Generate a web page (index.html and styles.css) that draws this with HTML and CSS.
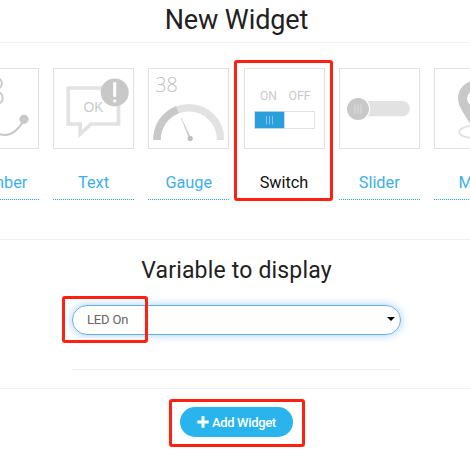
FILE: index.html
```html
<!DOCTYPE html>
<html lang="en">
<head>
<meta charset="utf-8">
<title>New Widget</title>
<link rel="stylesheet" href="styles.css">
</head>
<body>
<header class="title"><h1>New Widget</h1></header>
<section class="widgets">
  <a class="widget">
    <svg class="tile" viewBox="1 1 79 79">
      <text x="8" y="36.7" class="number" textLength="39.5" lengthAdjust="spacingAndGlyphs">88</text>
      <path d="M12 42C24 52 34 67 47 67C56 67 62 59 66 52" fill="none" stroke="#c8c8c8" stroke-width="2"/>
      <circle cx="66" cy="51.3" r="4.6" fill="#c8c8c8"/>
    </svg>
    <span class="label">Number</span>
  </a>
  <a class="widget">
    <svg class="tile" viewBox="1 1 79 79">
      <path d="M15.2 20H65.5V56H38L27.2 66V56H15.2Z" fill="none" stroke="#e2e2e2" stroke-width="3.7"/>
      <text x="30.5" y="43.5" class="ok" textLength="20" lengthAdjust="spacingAndGlyphs">OK</text>
      <circle cx="61.7" cy="24.4" r="14" fill="#c8c8c8"/>
      <path d="M61.7 14.3V28.7M61.7 31.4V34.2" stroke="#fff" stroke-width="3"/>
    </svg>
    <span class="label">Text</span>
  </a>
  <a class="widget">
    <svg class="tile" viewBox="1 1 79 79">
      <text x="7.3" y="24.3" class="reading" textLength="22.5" lengthAdjust="spacingAndGlyphs">38</text>
      <path d="M9 72V71.5A31.8 31.8 0 0 1 72.6 71.5V72" fill="none" stroke="#e2e2e2" stroke-width="7.5"/>
      <path d="M9 72V71.5A31.8 31.8 0 0 1 29.4 41.8" fill="none" stroke="#c8c8c8" stroke-width="7.5"/>
      <path d="M33.3 50L42.8 70L41.2 70.6Z" fill="#c8c8c8" stroke="#c8c8c8" stroke-width=".4"/>
      <circle cx="42.2" cy="70.4" r="2.6" fill="#c0c0c0"/>
    </svg>
    <span class="label">Gauge</span>
  </a>
  <a class="widget selected">
    <svg class="tile" viewBox="1 1 79 79">
      <text x="16" y="32.3" class="state" textLength="17" lengthAdjust="spacingAndGlyphs">ON</text>
      <text x="44.5" y="32.3" class="state" textLength="22" lengthAdjust="spacingAndGlyphs">OFF</text>
      <rect x="10.5" y="43.5" width="60" height="17" fill="#fff" stroke="#e2e2e2"/>
      <rect x="11" y="43.7" width="29.3" height="16.5" fill="#2b9fdb"/>
      <path d="M22.5 48V56.5M25.5 48V56.5M28.5 48V56.5" stroke="#8fccec" stroke-width=".9"/>
    </svg>
    <span class="label">Switch</span>
  </a>
  <a class="widget">
    <svg class="tile" viewBox="1 1 79 79">
      <rect x="15" y="33" width="56" height="15.2" rx="7.6" fill="#e2e2e2"/>
      <circle cx="19" cy="41" r="11.6" fill="#c8c8c8" stroke="#fff" stroke-width="1.2"/>
      <path d="M16 36.5V45.5M19 36.5V45.5M22 36.5V45.5" stroke="#dedede" stroke-width="1"/>
    </svg>
    <span class="label">Slider</span>
  </a>
  <a class="widget">
    <svg class="tile" viewBox="1 1 79 79">
      <ellipse cx="41" cy="64" rx="15.8" ry="6.2" fill="none" stroke="#e2e2e2" stroke-width="2"/>
      <path d="M41 66C37 53 24 42 24 30A17 17 0 0 1 58 30C58 42 45 53 41 66Z" fill="#c8c8c8"/>
      <circle cx="41" cy="30.3" r="8" fill="#fff"/>
    </svg>
    <span class="label">Map</span>
  </a>
</section>
<main class="variable">
  <h2>Variable to display</h2>
  <div class="field">
    <div class="select"><span>LED On</span><i class="arrow"></i></div>
  </div>
</main>
<footer class="actions">
  <button class="add">
    <svg class="plus" viewBox="0 0 12 12"><path d="M6 .3V11.7M.3 6H11.7" stroke="#fff" stroke-width="3"/></svg>
    <span>Add Widget</span>
  </button>
</footer>
<div class="mark mark-switch"></div>
<div class="mark mark-variable"></div>
<div class="mark mark-add"></div>
</body>
</html>
```
FILE: styles.css
```css
* { box-sizing: border-box; }
body {
  margin: 0;
  width: 470px;
  height: 455px;
  position: relative;
  overflow: hidden;
  background: #fff;
  color: #212121;
  font-family: Roboto, "Liberation Sans", sans-serif;
}
h1, h2 { margin: 0; font-weight: 400; text-align: center; white-space: nowrap; }
.title { height: 43px; border-bottom: 1px solid #f1f1f1; padding: 1px 0 0 3px; }
h1 { font-size: 27px; line-height: 39px; letter-spacing: -.1px; }
.widgets {
  height: 197px;
  border-bottom: 1px solid #f1f1f1;
  padding-top: 25px;
  display: grid;
  grid-template-columns: repeat(6, 81px);
  column-gap: 14.25px;
  margin-left: -42.25px;
  width: 513px;
}
.widget { color: #3cb0ea; }
.tile { display: block; width: 81px; height: 81px; border: 1px solid #e0e0e0; overflow: hidden; }
.label {
  display: block;
  height: 51px;
  padding-top: 20px;
  border-bottom: 1px dotted #2aa9e0;
  font-size: 16.3px;
  line-height: 28px;
  text-align: center;
}
.selected { color: #111; }
.selected .label { border-color: transparent; }
.number { font: 300 38px "Open Sans", sans-serif; fill: #c8c8c8; }
.ok { font: 14px "Liberation Sans", sans-serif; fill: #cacaca; }
.reading { font: 300 21px "Open Sans", sans-serif; fill: #c0c0c0; }
.state { font: 12px Roboto, sans-serif; fill: #c8c8c8; }
.variable { height: 149px; border-bottom: 1px solid #f1f1f1; padding-top: 14px; }
h2 { font-size: 23px; line-height: 34px; letter-spacing: .18px; padding-left: 3px; }
.field { width: 329px; height: 82px; margin-left: 72px; padding-top: 17px; border-bottom: 1px solid #f1f1f1; }
.select {
  height: 30px;
  display: flex;
  align-items: center;
  justify-content: space-between;
  padding: 0 5px 2px 14px;
  border: 1px solid #66afe9;
  border-radius: 15px;
  box-shadow: 0 0 8px rgba(102, 175, 233, .6);
  color: #666;
  font-size: 13px;
  letter-spacing: -.15px;
}
.arrow { border: 4px solid transparent; border-top: 4px solid #000; border-bottom: 0; }
.actions { padding: 18px 0 0 180px; }
.add {
  display: flex;
  align-items: center;
  gap: 3px;
  width: 113px;
  height: 30px;
  padding: 0 0 0 17px;
  border: 0;
  border-radius: 15px;
  background: #2ab4ed;
  color: #fff;
  font: 500 13px Roboto, sans-serif;
  letter-spacing: -.35px;
  white-space: nowrap;
}
.plus { width: 12px; height: 12px; flex: none; }
.mark { position: absolute; border: 3px solid #ff2012; border-radius: 3px; }
.mark-switch { left: 234px; top: 60px; width: 99px; height: 141px; }
.mark-variable { left: 62px; top: 296px; width: 86px; height: 47px; }
.mark-add { left: 169px; top: 399px; width: 136px; height: 48px; }
```
